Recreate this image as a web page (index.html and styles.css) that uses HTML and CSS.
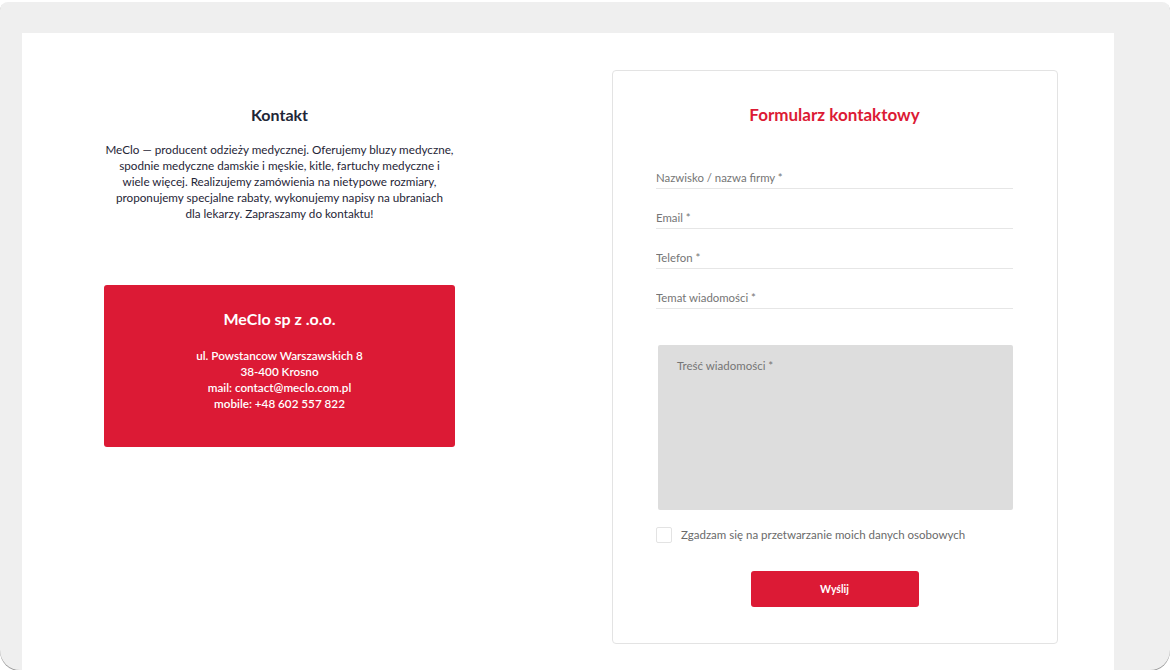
FILE: index.html
```html
<!DOCTYPE html>
<html lang="pl">
	<head>
		<meta charset="UTF-8">
		<title>Kontakt - MeClo</title>
		<link rel="stylesheet" href="styles.css">
	</head>
	<body>
		<div class="device">
			<div class="screen">
				<div class="about">
					<h2 class="about-title">Kontakt</h2>
					<p class="about-text">MeClo — producent odzieży medycznej. Oferujemy bluzy medyczne,<br>
						spodnie medyczne damskie i męskie, kitle, fartuchy medyczne i<br>
						wiele więcej. Realizujemy zamówienia na nietypowe rozmiary,<br>
						proponujemy specjalne rabaty, wykonujemy napisy na ubraniach<br>
						dla lekarzy. Zapraszamy do kontaktu!</p>
					<div class="company">
						<h3 class="company-name">MeClo sp z .o.o.</h3>
						<p class="company-info">
							ul. Powstancow Warszawskich 8<br>
							38-400 Krosno<br>
							mail: contact@meclo.com.pl<br>
							mobile: +48 602 557 822
						</p>
					</div>
				</div>
				<form class="contact-form">
					<h2 class="form-title">Formularz kontaktowy</h2>
					<input class="field" type="text" placeholder="Nazwisko / nazwa firmy *">
					<input class="field" type="text" placeholder="Email *">
					<input class="field" type="text" placeholder="Telefon *">
					<input class="field" type="text" placeholder="Temat wiadomości *">
					<textarea class="message" placeholder="Treść wiadomości *"></textarea>
					<label class="agree">
						<span class="checkbox"></span>
						Zgadzam się na przetwarzanie moich danych osobowych
					</label>
					<button class="send" type="button">Wyślij</button>
				</form>
			</div>
		</div>
	</body>
</html>
```

FILE: styles.css
```css
*{
	margin: 0;
	padding: 0;
	box-sizing: border-box;
}

body{
	font: 12px/16px Lato, "Open Sans", sans-serif;
	background: #fff;
	color: #222;
}

.device{
	width: 1170px;
	height: 668px;
	margin-top: 2px;
	background: #efefef;
	border-radius: 8px 8px 20px 20px;
	box-shadow: 0 1px 0 #9a9a9a;
	padding: 31px 56px 0 22px;
}

.screen{
	height: 100%;
	background: #fff;
	display: flex;
	padding: 37px 0 0 82px;
}

.about{
	width: 351px;
	text-align: center;
}

.about-title{
	font-size: 16px;
	font-weight: bold;
	line-height: 20px;
	color: #1f2637;
	margin-top: 35px;
}

.about-text{
	font-size: 11.7px;
	line-height: 16px;
	color: #1f2637;
	margin: 16px -10px 0;
	white-space: nowrap;
}

.company{
	margin-top: 64px;
	height: 162px;
	background: #dc1a35;
	border-radius: 3px;
	color: #fff;
	padding-top: 24px;
}

.company-name{
	font-size: 16px;
	font-weight: bold;
	line-height: 20px;
}

.company-info{
	margin-top: 18px;
	font-size: 11.7px;
	font-weight: 600;
	line-height: 16px;
}

.contact-form{
	width: 446px;
	height: 574px;
	margin-left: 157px;
	border: 1px solid #e3e3e3;
	border-radius: 4px;
	padding: 33px 44px 0 43px;
	display: flex;
	flex-direction: column;
}

.form-title{
	font-size: 17px;
	font-weight: bold;
	line-height: 22px;
	color: #dc1a35;
	text-align: center;
	margin-bottom: 33px;
}

.field{
	display: block;
	width: 100%;
	height: 30px;
	border: 0;
	border-bottom: 1px solid #e6e6e6;
	padding: 8px 0 0 0;
	font: 11.4px Lato, sans-serif;
	color: #555;
	outline: none;
	margin-bottom: 10px;
}

.field::placeholder,
.message::placeholder{
	color: #757575;
}

.message{
	display: block;
	width: 355px;
	height: 165px;
	margin: 26px 0 0 2px;
	background: #dddddd;
	border: 0;
	border-radius: 2px;
	padding: 13px 19px;
	font: 11.5px/16px Lato, sans-serif;
	resize: none;
	outline: none;
}

.agree{
	display: flex;
	align-items: center;
	gap: 9px;
	margin-top: 17px;
	font-size: 11.5px;
	color: #6a6a6a;
}

.checkbox{
	width: 16px;
	height: 16px;
	border: 1px solid #e3e3e3;
	border-radius: 2px;
}

.send{
	align-self: center;
	width: 168px;
	height: 36px;
	margin-top: 28px;
	background: #dc1a35;
	border: 0;
	border-radius: 3px;
	color: #fff;
	font: bold 10.5px Lato, sans-serif;
}
```
